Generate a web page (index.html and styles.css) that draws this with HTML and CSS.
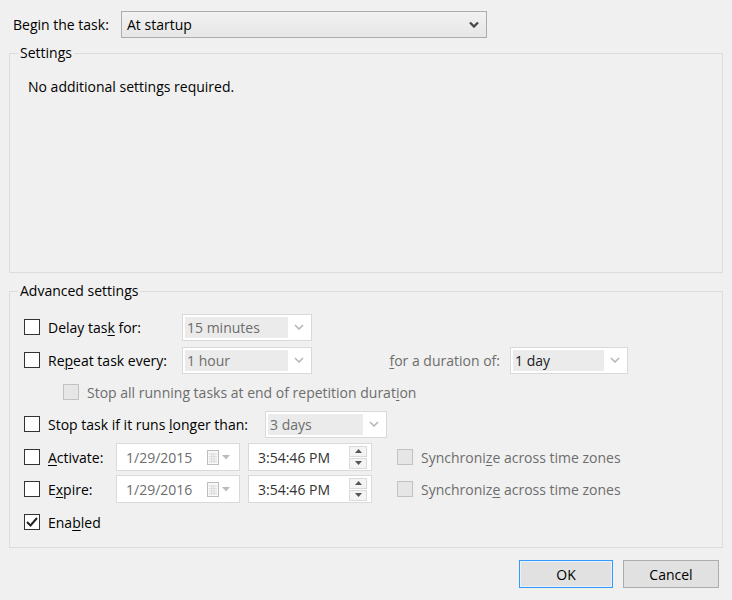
FILE: index.html
```html
<!DOCTYPE html>
<html lang="en">
<head>
    <meta charset="UTF-8">
    <title>New Trigger</title>
    <link rel="stylesheet" href="styles.css">
</head>
<body>
    <div class="begin">
        <span class="begin-label">Begin the task:</span>
        <div class="select">
            <span>At startup</span>
            <svg width="10" height="7" viewBox="0 0 10 7"><polyline points="1,1.5 5,5.5 9,1.5" fill="none" stroke="#4a4a4a" stroke-width="2.4"/></svg>
        </div>
    </div>

    <fieldset class="group settings">
        <legend>Settings</legend>
        <div class="settings-body">No additional settings required.</div>
    </fieldset>

    <fieldset class="group advanced">
        <legend>Advanced settings</legend>
        <div class="rows">
            <div class="row">
                <span class="check"></span>
                <span class="lbl w-134">Delay tas<u>k</u> for:</span>
                <div class="combo w-130">
                    <span class="val">15 minutes</span>
                    <span class="arrow"><svg width="10" height="6" viewBox="0 0 10 6"><polyline points="1,1 5,5 9,1" fill="none" stroke="#b4b4b4" stroke-width="1.5"/></svg></span>
                </div>
            </div>
            <div class="row gap-1">
                <span class="check"></span>
                <span class="lbl w-134">Re<u>p</u>eat task every:</span>
                <div class="combo w-130">
                    <span class="val">1 hour</span>
                    <span class="arrow"><svg width="10" height="6" viewBox="0 0 10 6"><polyline points="1,1 5,5 9,1" fill="none" stroke="#b4b4b4" stroke-width="1.5"/></svg></span>
                </div>
                <span class="lbl dim duration"><u>f</u>or a duration of:</span>
                <div class="combo w-118">
                    <span class="val dark">1 day</span>
                    <span class="arrow"><svg width="10" height="6" viewBox="0 0 10 6"><polyline points="1,1 5,5 9,1" fill="none" stroke="#b4b4b4" stroke-width="1.5"/></svg></span>
                </div>
            </div>
            <div class="row sub">
                <span class="check off"></span>
                <span class="lbl dim">Stop all running tasks at end of repetition durat<u>i</u>on</span>
            </div>
            <div class="row">
                <span class="check"></span>
                <span class="lbl w-217">Stop task if it runs <u>l</u>onger than:</span>
                <div class="combo w-122">
                    <span class="val">3 days</span>
                    <span class="arrow"><svg width="10" height="6" viewBox="0 0 10 6"><polyline points="1,1 5,5 9,1" fill="none" stroke="#b4b4b4" stroke-width="1.5"/></svg></span>
                </div>
            </div>
            <div class="row gap-1">
                <span class="check"></span>
                <span class="lbl w-68"><u>A</u>ctivate:</span>
                <div class="date">
                    <span>1/29/2015</span>
                    <span class="cal">
                        <svg width="12" height="15" viewBox="0 0 12 15"><rect x="0.5" y="0.5" width="11" height="14" fill="#f7f7f7" stroke="#bdbdbd"/><path d="M2 4h8M2 6.5h8M2 9h8M2 11.5h8M4.5 3v10M7 3v10" stroke="#dcdcdc" stroke-width="1"/></svg>
                        <svg width="8" height="5" viewBox="0 0 8 5"><polygon points="0,0 8,0 4,4.5" fill="#bdbdbd"/></svg>
                    </span>
                </div>
                <div class="time">
                    <span>3:54:46 PM</span>
                    <span class="spin">
                        <span><svg width="7" height="4" viewBox="0 0 7 4"><polygon points="0,4 7,4 3.5,0" fill="#555"/></svg></span>
                        <span><svg width="7" height="4" viewBox="0 0 7 4"><polygon points="0,0 7,0 3.5,4" fill="#555"/></svg></span>
                    </span>
                </div>
                <span class="check off sync"></span>
                <span class="lbl dim">Synchroni<u>z</u>e across time zones</span>
            </div>
            <div class="row">
                <span class="check"></span>
                <span class="lbl w-68">E<u>x</u>pire:</span>
                <div class="date">
                    <span>1/29/2016</span>
                    <span class="cal">
                        <svg width="12" height="15" viewBox="0 0 12 15"><rect x="0.5" y="0.5" width="11" height="14" fill="#f7f7f7" stroke="#bdbdbd"/><path d="M2 4h8M2 6.5h8M2 9h8M2 11.5h8M4.5 3v10M7 3v10" stroke="#dcdcdc" stroke-width="1"/></svg>
                        <svg width="8" height="5" viewBox="0 0 8 5"><polygon points="0,0 8,0 4,4.5" fill="#bdbdbd"/></svg>
                    </span>
                </div>
                <div class="time">
                    <span>3:54:46 PM</span>
                    <span class="spin">
                        <span><svg width="7" height="4" viewBox="0 0 7 4"><polygon points="0,4 7,4 3.5,0" fill="#555"/></svg></span>
                        <span><svg width="7" height="4" viewBox="0 0 7 4"><polygon points="0,0 7,0 3.5,4" fill="#555"/></svg></span>
                    </span>
                </div>
                <span class="check off sync"></span>
                <span class="lbl dim">Synchroniz<u>e</u> across time zones</span>
            </div>
            <div class="row gap-1">
                <span class="check on">
                    <svg width="12" height="10" viewBox="0 0 12 10"><polyline points="1,5 4.5,8.5 11,1" fill="none" stroke="#222" stroke-width="2"/></svg>
                </span>
                <span class="lbl">Ena<u>b</u>led</span>
            </div>
        </div>
    </fieldset>

    <div class="buttons">
        <button class="btn ok">OK</button>
        <button class="btn cancel">Cancel</button>
    </div>
</body>
</html>
```

FILE: styles.css
```css
*{
    margin: 0;
    padding: 0;
    box-sizing: border-box;
    font-family: "Open Sans", "Noto Sans", sans-serif;
}
body{
    width: 732px;
    height: 600px;
    background: #f0f0f0;
    color: #000;
    font-size: 14px;
    padding: 11px 9px 0 9px;
    overflow: hidden;
}
u{
    text-decoration-thickness: 1px;
    text-underline-offset: 2px;
}

/* begin the task */
.begin{
    display: flex;
    align-items: center;
    height: 27px;
    padding-left: 4px;
}
.begin-label{
    width: 108px;
}
.select{
    width: 366px;
    height: 27px;
    border: 1px solid #acacac;
    background: linear-gradient(#f2f2f2, #e6e6e6);
    display: flex;
    align-items: center;
    justify-content: space-between;
    padding: 0 7px 0 5px;
}

/* group boxes */
.group{
    border: 1px solid #dcdcdc;
}
.group legend{
    margin-left: 8px;
    padding: 0 2px;
    line-height: 20px;
}
.settings{
    margin-top: 5px;
}
.settings-body{
    height: 209px;
    padding: 14px 18px 0 18px;
    line-height: 20px;
}
.advanced{
    margin-top: 8px;
}
.rows{
    display: flex;
    flex-direction: column;
    gap: 4px;
    padding: 12px 0 11px 14px;
}
.row{
    display: flex;
    align-items: center;
    height: 28px;
}
.row.gap-1{
    margin-top: 1px;
}
.row.sub{
    padding-left: 39px;
}
.lbl{
    white-space: nowrap;
}
.lbl.dim{
    color: #6d6d6d;
}
.w-134{ width: 134px; }
.w-217{ width: 217px; }
.w-68{ width: 68px; }

/* checkboxes */
.check{
    width: 16px;
    height: 16px;
    flex: none;
    border: 1px solid #333;
    background: #fff;
    margin-right: 8px;
    display: flex;
    align-items: center;
    justify-content: center;
}
.check.off{
    border-color: #c2c2c2;
    background: #e6e6e6;
}
.check.sync{
    margin-left: 25px;
}

/* combo boxes */
.combo{
    height: 27px;
    border: 1px solid #d9d9d9;
    background: #fff;
    padding: 2px;
    display: flex;
    flex: none;
}
.w-130{ width: 130px; }
.w-118{ width: 118px; }
.w-122{ width: 122px; }
.combo .val{
    flex: 1;
    background: #ebebeb;
    color: #6d6d6d;
    line-height: 21px;
    padding-left: 2px;
}
.combo .val.dark{
    color: #222;
}
.combo .arrow{
    width: 21px;
    display: flex;
    align-items: center;
    justify-content: center;
}
.duration{
    width: 198px;
    text-align: right;
    padding-right: 10px;
}

/* date and time pickers */
.date, .time{
    width: 124px;
    height: 28px;
    flex: none;
    border: 1px solid #d9d9d9;
    background: #fff;
    display: flex;
    align-items: center;
    padding-left: 9px;
}
.date{
    color: #6d6d6d;
    padding-right: 9px;
}
.cal{
    margin-left: auto;
    display: flex;
    align-items: center;
    gap: 3px;
}
.time{
    margin-left: 8px;
    color: #333;
    padding-right: 4px;
}
.spin{
    margin-left: auto;
    display: flex;
    flex-direction: column;
    gap: 1px;
}
.spin span{
    width: 18px;
    height: 11px;
    border: 1px solid #dadada;
    background: #f4f4f4;
    display: flex;
    align-items: center;
    justify-content: center;
}

/* buttons */
.buttons{
    display: flex;
    justify-content: flex-end;
    gap: 10px;
    margin-top: 12px;
    padding-right: 4px;
}
.btn{
    height: 28px;
    width: 96px;
    border: 1px solid #adadad;
    background: #e1e1e1;
    font-size: 14px;
    color: #000;
}
.btn.ok{
    width: 94px;
    border-color: #3399ff;
    box-shadow: inset 0 0 0 1px #e5f1fb;
}
```
